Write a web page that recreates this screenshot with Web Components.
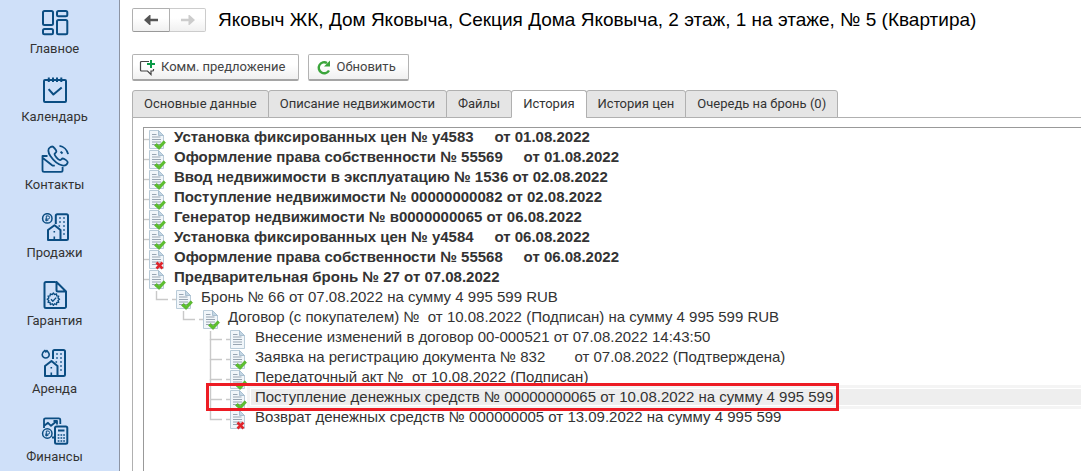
<!DOCTYPE html>
<html lang="ru">
<head>
<meta charset="utf-8">
<title>Яковыч ЖК — Квартира № 5</title>
<style>
  body { margin: 0; font: 13px/20px Roboto, "Liberation Sans", Arial, sans-serif; color: #333; background: #fff; }
</style>
</head>
<body>
<crm-app>
  <crm-sidebar slot="side">
    <nav-item icon="home">Главное</nav-item>
    <nav-item icon="calendar">Календарь</nav-item>
    <nav-item icon="contacts">Контакты</nav-item>
    <nav-item icon="sales">Продажи</nav-item>
    <nav-item icon="warranty">Гарантия</nav-item>
    <nav-item icon="rent">Аренда</nav-item>
    <nav-item icon="finance">Финансы</nav-item>
  </crm-sidebar>
  <page-header>Яковыч ЖК, Дом Яковыча, Секция Дома Яковыча, 2 этаж, 1 на этаже, № 5 (Квартира)</page-header>
  <tool-bar>
    <tool-button icon="offer">Комм. предложение</tool-button>
    <tool-button icon="refresh">Обновить</tool-button>
  </tool-bar>
  <tab-strip>
    <tab-item>Основные данные</tab-item>
    <tab-item>Описание недвижимости</tab-item>
    <tab-item>Файлы</tab-item>
    <tab-item active>История</tab-item>
    <tab-item>История цен</tab-item>
    <tab-item>Очередь на бронь (0)</tab-item>
  </tab-strip>
  <history-tree>
    <tree-row level="0" state="ok">Установка фиксированных цен № у4583&nbsp;&nbsp;&nbsp;&nbsp; от 01.08.2022</tree-row>
    <tree-row level="0" state="ok">Оформление права собственности № 55569&nbsp;&nbsp;&nbsp;&nbsp; от 01.08.2022</tree-row>
    <tree-row level="0" state="ok">Ввод недвижимости в эксплуатацию № 1536 от 02.08.2022</tree-row>
    <tree-row level="0" state="ok">Поступление недвижимости № 00000000082 от 02.08.2022</tree-row>
    <tree-row level="0" state="ok">Генератор недвижимости № в0000000065 от 06.08.2022</tree-row>
    <tree-row level="0" state="ok">Установка фиксированных цен № у4584&nbsp;&nbsp;&nbsp;&nbsp; от 06.08.2022</tree-row>
    <tree-row level="0" state="deleted">Оформление права собственности № 55568&nbsp;&nbsp;&nbsp;&nbsp; от 06.08.2022</tree-row>
    <tree-row level="0" state="ok">Предварительная бронь № 27 от 07.08.2022</tree-row>
    <tree-row level="1" state="ok" first>Бронь № 66 от 07.08.2022 на сумму 4 995 599 RUB</tree-row>
    <tree-row level="2" state="ok" first>Договор (с покупателем) №&nbsp; от 10.08.2022 (Подписан) на сумму 4 995 599 RUB</tree-row>
    <tree-row level="3" state="draft" first>Внесение изменений в договор 00-000521 от 07.08.2022 14:43:50</tree-row>
    <tree-row level="3" state="ok">Заявка на регистрацию документа № 832&nbsp;&nbsp;&nbsp;&nbsp;&nbsp;&nbsp; от 07.08.2022 (Подтверждена)</tree-row>
    <tree-row level="3" state="ok">Передаточный акт №&nbsp; от 10.08.2022 (Подписан)</tree-row>
    <tree-row level="3" state="ok" selected>Поступление денежных средств № 00000000065 от 10.08.2022 на сумму 4 995 599</tree-row>
    <tree-row level="3" state="deleted">Возврат денежных средств № 000000005 от 13.09.2022 на сумму 4 995 599</tree-row>
  </history-tree>
</crm-app>

<script>
const define = (name, render) => customElements.define(name, class extends HTMLElement {
  connectedCallback() {
    if (!this.shadowRoot) this.attachShadow({ mode: 'open' }).innerHTML = render(this);
  }
});

const coin = (x, y) => `<circle cx="${x}" cy="${y}" r="4.7" stroke-width="1.5"/><path d="M${x - 1} ${y + 3}v-5.5h1.7a1.5 1.5 0 0 1 0 3.2h-2.8M${x - 2} ${y + 1.9}h3" stroke-width="1"/>`;
const dots = (x, y, cols, rows) => {
  let d = '';
  for (let r = 0; r < rows; r++) for (let c = 0; c < cols; c++) d += `M${x + c * 4} ${y + r * 4}h1.6`;
  return `<path d="${d}" stroke-width="1.6"/>`;
};
const gear = (() => {
  let p = '';
  for (let i = 0; i < 24; i++) {
    const r = i % 2 ? 4.7 : 6.2, a = i * Math.PI / 12;
    p += (i ? 'L' : 'M') + (12.4 + r * Math.cos(a)).toFixed(2) + ' ' + (18.2 + r * Math.sin(a)).toFixed(2);
  }
  return p + 'Z';
})();

const NAV = {
  home: `<rect x="2" y="2" width="10" height="14" rx="1.5"/><rect x="2" y="20" width="10" height="5.3" rx="1.5"/><rect x="16" y="2" width="10.3" height="5.3" rx="1.5"/><rect x="16" y="11" width="10.3" height="14.3" rx="1.5"/>`,
  calendar: `<rect x="3" y="3" width="22" height="22" rx="1"/><path d="M7.8 .5v4.5M12 .5v4.5M16 .5v4.5M20.3 .5v4.5"/><path d="M7.6 12.2l4.8 5.3 8.3-7"/>`,
  contacts: `<path d="M6.5 11H1.5V25.3a1.6 1.6 0 0 0 1.6 1.6H20a1.6 1.6 0 0 0 1.6-1.6V22M1.8 13l9.3 7.2q1.2.8 2.6 0" stroke-width="1.8"/><path d="M9.2 2.2C6.6 3.4 6.8 7.2 9.4 11c3.4 5 8.6 9 12.6 9.6 2.6.3 4.6-1.4 4.7-3.5.1-1-3.7-3.7-5-3.6-1 .1-1.7 1.7-2.6 1.7-1.9-.3-5.6-4.6-5.6-6.1 0-1 1.9-1.3 1.9-2.5C15.4 5 12.2 1.4 11.2 1.5c-.6 0-1.3.3-2 .7Z" stroke-width="1.8"/><path d="M18.5 .9c4 .6 7.6 4 8.6 8.2" stroke-width="1.8"/><path d="M19.6 6.6l1.9 1.9" stroke-width="2"/>`,
  sales: `${coin(6.3, 5.4)}<path d="M14.8 11V2.800a1.5 1.5 0 0 1 1.5-1.5H25.5A1.5 1.5 0 0 1 27 2.8V25.5A1.5 1.5 0 0 1 25.5 27H7V17l6.5-4.8L19.5 17V27"/>${dots(18.2, 5, 2, 2)}${dots(22.2, 13, 1, 3)}<path d="M13.3 27v-3.5M13.3 18v1.6M17.5 13h1.6" stroke-width="1.6"/>`,
  warranty: `<path d="M14.5 1H5A1.5 1.5 0 0 0 3.5 2.5V25.5A1.5 1.5 0 0 0 5 27H23.5A1.5 1.5 0 0 0 25 25.5V10.5L15.5 1V9a1.5 1.5 0 0 0 1.5 1.5H25"/><path d="${gear}" stroke-width="1.3"/><path d="M10 18.2l1.8 2 3.4-3.6" stroke-width="1.3"/>`,
  rent: `<path d="M4.5 1C3.4 2.2 1.2 3 1.2 5.5a3.5 3.5 0 0 0 7 0C8.2 3.8 6.5 2.6 6 1.5L4.3 3.6" stroke-width="1.6"/><path d="M12 10V2.5A1.5 1.5 0 0 1 13.5 1H22.5A1.5 1.5 0 0 1 24 2.5V25.5A1.5 1.5 0 0 1 22.5 27H4V17l6.5-5L16.5 17V27"/>${dots(15.2, 5, 2, 2)}${dots(19.2, 13, 1, 3)}<path d="M10.3 27v-3.5M10.3 18v1.6M14.5 13h1.6" stroke-width="1.6"/>`,
  finance: `<path d="M3 11V2.8A1.5 1.5 0 0 1 4.5 1.3H17.8A1.5 1.5 0 0 1 19.3 2.8V7M3.5 8.500l3.5-2.7 3 3L15.8 4M12.5 4h3.5v3.5" stroke-width="1.8"/>${coin(6.3, 16.5)}<rect x="14" y="9.5" width="12.3" height="17.3" rx="1.5"/><path d="M17 13.5h6.5M11 20.5h3" stroke-width="1.8"/><path d="M16.7 18h1.7M19.5 18h1.7M22.2 18h1.7M16.7 21h1.7M19.5 21h1.7M22.2 21h1.7M16.7 24h1.7M19.5 24h1.7M22.2 24h1.7" stroke-width="1.6"/>`
};

define('crm-app', () => `
<style>
  :host { display: flex; min-height: 100vh; }
  main { flex: 1; min-width: 0; display: flex; flex-direction: column; padding-left: 12px; overflow: hidden; }
</style>
<slot name="side"></slot><main><slot></slot></main>`);

define('crm-sidebar', () => `
<style>
  :host { display: block; box-sizing: border-box; flex: 0 0 120px; background: #cfe0f9; border-right: 1px solid #8d94a3; }
  nav { display: flex; flex-direction: column; gap: 18px; padding: 9px 10px 0 0; }
</style>
<nav aria-label="Разделы"><slot></slot></nav>`);

define('nav-item', el => `
<style>
  :host { display: block; }
  a { display: flex; flex-direction: column; align-items: center; color: inherit; text-decoration: none; }
  svg { width: 28px; height: 28px; stroke: #0b4d82; stroke-width: 2; fill: none; stroke-linejoin: round; margin-bottom: 2px; }
</style>
<a href="#${el.getAttribute('icon')}"><svg viewBox="0 0 28 28" aria-hidden="true">${NAV[el.getAttribute('icon')]}</svg><span><slot></slot></span></a>`);

define('page-header', () => `
<style>
  :host { display: flex; align-items: center; gap: 12px; margin-top: 8px; }
  .history { display: flex; flex: none; }
  button { box-sizing: border-box; width: 38px; height: 24px; padding: 0; border: 1px solid #b0b0b0; border-bottom-color: #999; border-radius: 2px 0 0 2px; background: linear-gradient(#fff 40%, #f0f0f0); color: #555; display: flex; align-items: center; justify-content: center; }
  button + button { margin-left: -1px; width: 37px; border-color: #ccc; border-left-color: #b0b0b0; border-radius: 0 2px 2px 0; color: #ccc; }
  svg { width: 14px; height: 12px; }
  h1 { margin: 0; font: 19px/24px "Liberation Sans", Arial, sans-serif; color: #000; white-space: nowrap; }
</style>
<div class="history">
  <button aria-label="Назад"><svg viewBox="0 0 14 12"><path d="M0 6L5.5 1 6.5 1V4.7H14V7.3H6.5V11H5.5Z" fill="currentColor"/></svg></button>
  <button aria-label="Вперёд" disabled><svg viewBox="0 0 14 12"><path d="M14 6L8.5 1 7.5 1V4.7H0V7.3H7.5V11H8.5Z" fill="currentColor"/></svg></button>
</div>
<h1><slot></slot></h1>`);

define('tool-bar', () => `
<style>:host { display: flex; gap: 9px; margin: 22px 0 9px; }</style><slot></slot>`);

const TOOL = {
  offer: `<path d="M10 2.5H2.5a1 1 0 0 0-1 1V11a1 1 0 0 0 1 1H8.5L12 15.5V12H13.5a1 1 0 0 0 1-1V10" fill="none" stroke="#444" stroke-width="1.2"/><path d="M12 1V9M8 5H16" stroke="#0a9a48" stroke-width="2"/>`,
  refresh: `<path d="M14 11.5A5.500 5.500 0 1 1 12 4" fill="none" stroke="#3ba53b" stroke-width="2.400"/><path d="M9 7.500H15V1.500Z" fill="#3ba53b"/>`
};
define('tool-button', el => `
<style>
  :host { display: block; }
  button { box-sizing: border-box; display: flex; align-items: center; height: 27px; gap: 6px; padding: 0 12px 0 6px; border: 1px solid #b3b3b3; border-bottom: 2px solid #a5a5a5; border-radius: 2px; background: linear-gradient(#fff 40%, #f0f0f0); font: inherit; color: #444; white-space: nowrap; }
  svg { width: 16px; height: 16px; overflow: visible; }
</style>
<button><svg viewBox="0 0 16 16" aria-hidden="true">${TOOL[el.getAttribute('icon')]}</svg><slot></slot></button>`);

define('tab-strip', () => `
<style>
  :host { display: block; border-bottom: 1px solid #b0b0b0; }
  div { display: flex; margin-bottom: -1px; }
</style>
<div role="tablist"><slot></slot></div>`);

define('tab-item', () => `
<style>
  :host { display: block; margin-right: -1px; }
  button { box-sizing: border-box; height: 28px; padding: 0 11px; border: 1px solid #b0b0b0; border-radius: 3px 3px 0 0; background: #e5e5e5; font: inherit; color: inherit; white-space: nowrap; display: block; }
  :host([active]) button { background: #fff; border-bottom-color: #fff; }
</style>
<button role="tab"><slot></slot></button>`);

define('history-tree', () => `
<style>
  :host { flex: 1; display: flex; padding: 9px 0 0 10px; border-left: 1px solid #b0b0b0; }
  div { flex: 1; min-width: 0; border: solid #999; border-width: 1px 0 0 1px; }
</style>
<div role="tree" aria-label="История"><slot></slot></div>`);

const CHECK = `<path d="M6.500 17.500L8.700 15.400 11 17.700 15.700 12.800 17.500 14.600 11.200 21.500Z" fill="#5cc02c" stroke="#45a31f" stroke-width=".6"/>`;
const CROSS = `<path d="M8.500 14.500L14.500 20.500M14.500 14.500L8.500 20.500" stroke="#e0242b" stroke-width="2.600"/>`;
define('tree-row', el => {
  const level = +el.getAttribute('level'), state = el.getAttribute('state');
  const selected = el.hasAttribute('selected');
  const branch = level
    ? `M-18.5 ${el.hasAttribute('first') ? 3 : -9}V11.5H-7M-3 11.5H1`
    : 'M-4 11.5H1';
  return `
<style>
  :host { display: flex; align-items: flex-start; height: 20px; padding-left: ${4 + level * 27}px; font: ${level ? 'normal' : 'bold'} 15px/18px "Liberation Sans", Arial, sans-serif; white-space: nowrap; }
  svg { flex: none; width: 18px; height: 20px; margin-right: 4px; overflow: visible; position: relative; }
  span { position: relative; box-sizing: border-box; flex: 1; padding-left: 4px; height: 20px; }
  .selected { height: 16px; line-height: 16px; margin-top: 1px; background: #eee; outline: 1px solid #fff; box-shadow: 0 0 0 4px #f4f4f4; z-index: 1; }
  .frame { position: absolute; inset: -5px -6px -6px -49px; border: 3px solid #ed1c24; }
  b { position: relative; font-weight: inherit; }
</style>
<svg viewBox="0 0 18 20" aria-hidden="true">
  <path d="${branch}" fill="none" stroke="#c9c9c9" stroke-width="1.4"/>
  <path d="M1.5 2.5H10.5L15.5 7.5V20.5H1.5Z" fill="#f1f6fa" stroke="#b9cbd8"/>
  <path d="M10.5 2.5V7.5H15.5Z" fill="#c3d6e4" stroke="#a9bfd0"/>
  <path d="M4 6.5H8.5M4 9H12.500M4 11.500H13M4 14H13M4 16.500H13" stroke="#98a5b2"/>
  ${state === 'ok' ? CHECK : state === 'deleted' ? CROSS : ''}
</svg>
<span role="treeitem" ${selected ? 'class="selected" aria-selected="true"' : ''}><b><slot></slot>${selected ? '<i class="frame"></i>' : ''}</b></span>`;
});
</script>
</body>
</html>
